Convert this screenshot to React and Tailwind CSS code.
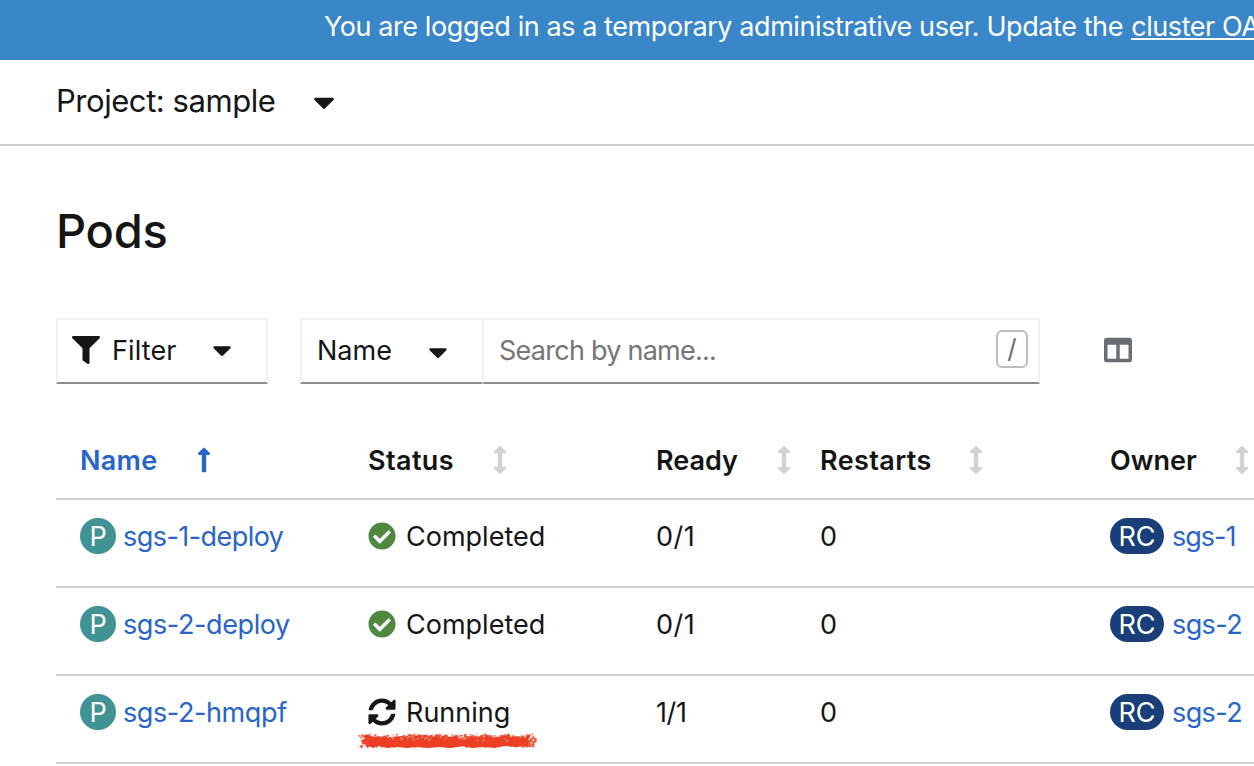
import React from "react";
import {
  FaCaretDown,
  FaFilter,
  FaLongArrowAltUp,
  FaArrowsAltV,
  FaCheckCircle,
  FaSyncAlt,
  FaColumns,
} from "react-icons/fa";

const COLS = "grid grid-cols-[288px_288px_164px_290px_224px]";

const PODS = [
  { name: "sgs-1-deploy", nameCls: "tracking-[-0.55px]", status: "Completed", ready: "0/1", readyCls: "tracking-[0.5px]", restarts: "0", owner: "sgs-1", ownerCls: "tracking-[-1px]" },
  { name: "sgs-2-deploy", nameCls: "tracking-[-0.4px]", status: "Completed", ready: "0/1", readyCls: "tracking-[0.5px]", restarts: "0", owner: "sgs-2", ownerCls: "tracking-[-0.6px]" },
  { name: "sgs-2-hmqpf", nameCls: "tracking-[-0.4px]", status: "Running", ready: "1/1", readyCls: "tracking-[-0.4px]", restarts: "0", owner: "sgs-2", ownerCls: "tracking-[-0.6px]" },
];

const HEADERS = [
  { label: "Name", cls: "w-[117px] tracking-[0.3px]", sorted: true },
  { label: "Status", cls: "w-[125px] tracking-[0.4px]" },
  { label: "Ready", cls: "w-[121px]" },
  { label: "Restarts", cls: "w-[149px] tracking-[0.4px]" },
  { label: "Owner", cls: "w-[125px]" },
];

// Seeded generator so the marker stroke is the same on every render.
function makeRandom(seed) {
  let s = seed;
  return () => {
    s = (s * 1664525 + 1013904223) % 4294967296;
    return s / 4294967296;
  };
}

function buildMarker() {
  const rnd = makeRandom(11);
  let grain = "";
  let gaps = "";
  for (let i = 0; i < 620; i++) {
    const x = 1 + rnd() * 176;
    const y = 1.5 + rnd() * 12;
    const w = 1 + rnd() * 2;
    grain += `M${x.toFixed(1)} ${y.toFixed(1)}l${w.toFixed(1)} ${(rnd() * 1.6 - 1.2).toFixed(1)}l-0.6 1.6z`;
  }
  for (let i = 0; i < 100; i++) {
    const x = 12 + rnd() * 162;
    const y = 1.5 + rnd() * rnd() * 7;
    gaps += `M${x.toFixed(1)} ${y.toFixed(1)}l${(0.6 + rnd() * 1.2).toFixed(1)} ${(-0.4 - rnd()).toFixed(1)}`;
  }
  return { grain, gaps };
}

const MARKER = buildMarker();

function MarkerStroke() {
  return (
    <svg className="pointer-events-none absolute top-[57px] left-[13px]" width="182" height="18" viewBox="0 0 182 18" fill="none">
      <path
        d="M2 2l5 1 3-1 6 2 10-1 9 1 8-1 9 1 12-2 10 2 9-1 12 1 9-2 12 2 11-1 10 1 12-1 9 1 8-1 7 1-2 3 4 1-5 3 2 3-7-1-6 1-12-1-9 2-12-1-11 1-9-2-12 2-12-1-11 1-12-1-9 1-9-1-11 1-8-2-9 1-5-2 4-3-5-2 4-2z"
        fill="#ed4024"
      />
      <path d={MARKER.grain} fill="#ed4024" stroke="#ed4024" strokeWidth="0.4" />
      <path d={MARKER.gaps} stroke="#fff" strokeWidth="0.9" />
    </svg>
  );
}

function Badge({ children, className }) {
  return (
    <span className={`flex h-9 shrink-0 items-center justify-center rounded-full pt-0.5 text-white ${className}`}>{children}</span>
  );
}

export default function App() {
  return (
    <div className="flex h-[766px] w-[1254px] flex-col overflow-hidden bg-white font-[Inter,sans-serif] text-[27px] leading-9 whitespace-nowrap text-[#151515]">
      <div className="flex h-[60px] shrink-0 items-start bg-[#3987c9] pt-[9px] pl-[324px] tracking-[-0.42px] text-white">
        <span className="whitespace-pre">You are logged in as a temporary administrative user. Update the </span>
        <a className="ml-px underline decoration-2 underline-offset-2">cluster OAuth configuration</a>
      </div>

      <div className="flex h-[86px] shrink-0 items-center border-b-2 border-[#cccccc] pl-14">
        <span className="w-[258px] pb-0.5 text-[31px] tracking-[-0.45px]">Project: sample</span>
        <span className="flex w-5 justify-center">
          <FaCaretDown className="shrink-0" size={34} />
        </span>
      </div>

      <h1 className="mt-[57px] ml-14 h-14 shrink-0 text-[47px] leading-[56px] font-medium tracking-[-0.3px]">Pods</h1>

      <div className="mt-[59px] ml-14 flex h-[66px] shrink-0">
        <div className="flex w-[212px] items-center border-2 border-[#f0f0f0] border-b-[#8a8d90] pl-[14px]">
          <FaFilter className="mb-0.5" size={28} />
          <span className="ml-3 w-[102px] tracking-[0.1px]">Filter</span>
          <span className="flex w-4 justify-center pb-0.5">
            <FaCaretDown className="shrink-0" size={30} />
          </span>
        </div>
        <div className="ml-8 flex w-[182px] items-center border-2 border-r-0 border-[#f0f0f0] border-b-[#8a8d90] pl-[15px]">
          <span className="w-[113px]">Name</span>
          <span className="flex w-4 justify-center pt-px">
            <FaCaretDown className="shrink-0" size={30} />
          </span>
        </div>
        <div className="flex w-[558px] items-center justify-between border-2 border-[#f0f0f0] border-b-[#8a8d90] pr-[10px] pl-[15px]">
          <span className="tracking-[-0.75px] text-[#757575]">Search by name...</span>
          <kbd className="mb-1 flex h-[38px] w-8 items-center justify-center rounded-md border-2 border-[#bdbdbd] font-[Inter,sans-serif] text-[26px] text-[#6a6e73]">
            /
          </kbd>
        </div>
        <div className="ml-16 flex items-center pb-0.5 text-[#6a6e73]">
          <FaColumns size={28} />
        </div>
      </div>

      <div className="ml-14 flex flex-col">
        <div className={`${COLS} h-[116px] border-b-2 border-[#d2d2d2] pt-[59px] font-semibold`}>
          {HEADERS.map((h) => (
            <div key={h.label} className={`flex h-9 items-center pl-6 ${h.sorted ? "text-[#2865c8]" : ""}`}>
              <span className={h.cls}>{h.label}</span>
              <span className="flex w-[14px] shrink-0 justify-center pb-0.5">
                {h.sorted ? (
                  <FaLongArrowAltUp className="shrink-0" size={28} />
                ) : (
                  <FaArrowsAltV className="shrink-0 text-[#d2d2d2]" size={28} />
                )}
              </span>
            </div>
          ))}
        </div>

        {PODS.map((p) => (
          <div key={p.name} className={`${COLS} h-[88px] border-b-2 border-[#d2d2d2] pt-[18px]`}>
            <div className="flex h-9 items-center pl-6">
              <Badge className="w-9 bg-[#419393]">P</Badge>
              <a className={`ml-[7px] pt-0.5 text-[#2865c8] ${p.nameCls}`}>{p.name}</a>
            </div>
            <div className="relative -mt-[18px] flex h-[72px] items-center pl-6">
              {p.status === "Running" ? (
                <FaSyncAlt className="shrink-0" size={28} />
              ) : (
                <FaCheckCircle className="shrink-0 text-[#51883f]" size={28} />
              )}
              <span className="ml-2.5 pt-0.5">{p.status}</span>
              {p.status === "Running" && <MarkerStroke />}
            </div>
            <div className={`h-9 pt-px pl-6 ${p.readyCls}`}>{p.ready}</div>
            <div className="h-9 pt-px pl-6">{p.restarts}</div>
            <div className="flex h-9 items-center pl-6">
              <Badge className="w-[54px] bg-[#183f7a]">RC</Badge>
              <a className={`ml-2 pt-0.5 text-[#2865c8] ${p.ownerCls}`}>{p.owner}</a>
            </div>
          </div>
        ))}
      </div>
    </div>
  );
}
